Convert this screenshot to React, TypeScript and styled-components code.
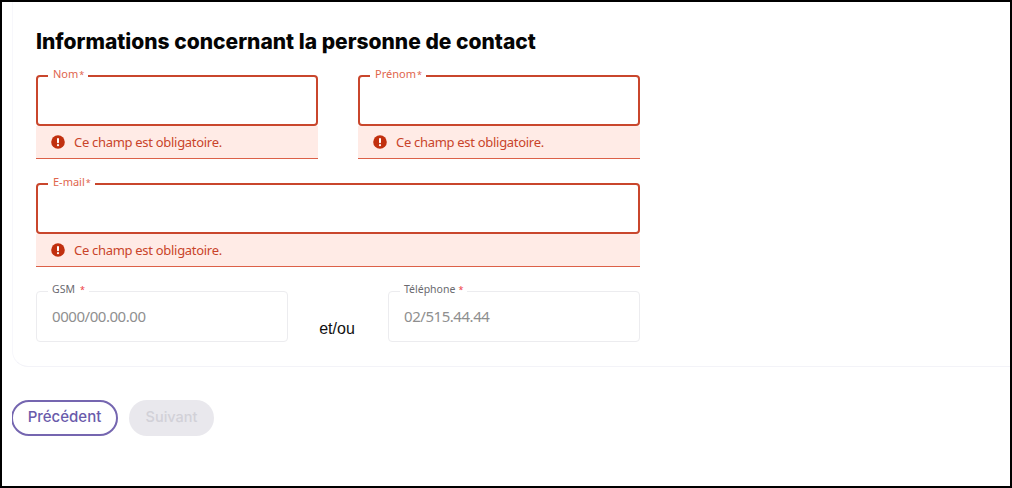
import React from "react";
import styled, { createGlobalStyle } from "styled-components";

const Global = createGlobalStyle`
  html, body { margin: 0; padding: 0; background: #fff; }
  * { box-sizing: border-box; }
`;

const Frame = styled.div`
  width: 1012px;
  height: 488px;
  border: 2px solid #000;
  background: #fff;
  padding-left: 10px;
  overflow: hidden;
`;

const Card = styled.section`
  height: 365px;
  padding: 27px 0 0 23px;
  border-bottom: 1px solid #f3f3f8;
  border-left: 1px solid #f7f7fb;
  border-bottom-left-radius: 16px;
  margin-right: -2px;
`;

const Title = styled.h2`
  margin: 0 0 20px;
  font: 800 21px/26px "Inter", "Liberation Sans", sans-serif;
  letter-spacing: 0;
  color: #050505;
`;

const Row = styled.div<{ $gap: number; $mb: number }>`
  display: flex;
  width: 604px;
  gap: ${(p) => p.$gap}px;
  margin-bottom: ${(p) => p.$mb}px;
`;

const Field = styled.div<{ $w?: number }>`
  flex: ${(p) => (p.$w ? `0 0 ${p.$w}px` : "1 1 0")};
  min-width: 0;
`;

const Box = styled.div<{ $error?: boolean }>`
  position: relative;
  height: 51px;
  padding: 12px 15px 0;
  border-style: solid;
  border-color: ${(p) => (p.$error ? "#c9462c" : "#ececef")};
  border-width: ${(p) => (p.$error ? "2px" : "1px")};
  border-radius: 4px;
  background: #fff;
  font: 400 15px/24px "Noto Sans", sans-serif;
  color: #8f8f8f;
  letter-spacing: -0.45px;
`;

const Label = styled.span<{ $error?: boolean }>`
  position: absolute;
  top: -10px;
  left: ${(p) => (p.$error ? 10 : 11)}px;
  padding: ${(p) => (p.$error ? "0 4px 0 5px" : "0 4px")};
  background: #fff;
  font: 400 ${(p) => (p.$error ? 11 : 10.5)}px/14px "Noto Sans", sans-serif;
  letter-spacing: 0;
  color: ${(p) => (p.$error ? "#e0654d" : "#6a6a6f")};
`;

const Req = styled.span<{ $gap: number }>`
  font-size: 9px;
  color: #ee3a3f;
  margin-left: ${(p) => p.$gap}px;
`;

const Star = styled.span`
  font-size: 9px;
  margin-left: 1px;
`;

const ErrorBar = styled.div`
  display: flex;
  align-items: center;
  gap: 9px;
  height: 33px;
  padding: 0 0 1px 15px;
  background: #ffebe6;
  border-bottom: 1px solid #dc6048;
  font: 400 13px/18px "Noto Sans", sans-serif;
  letter-spacing: -0.3px;
  color: #c9442a;
`;

const Separator = styled.div`
  flex: 1 1 0;
  display: flex;
  justify-content: center;
  padding: 29px 2px 0 0;
  font: 400 16px/18px "Liberation Sans", sans-serif;
  color: #111;
`;

const Actions = styled.div`
  display: flex;
  gap: 11px;
  margin-top: 33px;
  overflow: hidden;
`;

const Button = styled.button<{ $primary?: boolean }>`
  height: 36px;
  padding: 0 0 2px;
  width: ${(p) => (p.$primary ? 107 : 85)}px;
  margin-left: ${(p) => (p.$primary ? -1 : 0)}px;
  border-radius: 18px;
  border: ${(p) => (p.$primary ? "2px solid #7566b0" : "none")};
  background: ${(p) => (p.$primary ? "#fff" : "#e9e8ed")};
  color: ${(p) => (p.$primary ? "#6a5bab" : "#d2d1d8")};
  font: 500 ${(p) => (p.$primary ? 15 : 14.5)}px/20px "Inter", "Liberation Sans", sans-serif;
`;

const ErrorIcon = () => (
  <svg width="14" height="14" viewBox="0 0 14 14" aria-hidden="true">
    <circle cx="7" cy="7" r="6.8" fill="#c1300f" />
    <rect x="6" y="3" width="2" height="5.2" rx="0.9" fill="#fff" />
    <circle cx="7" cy="10.2" r="1.1" fill="#fff" />
  </svg>
);

const RequiredField = ({ label }: { label: string }) => (
  <>
    <Box $error>
      <Label $error>
        {label}
        <Star>*</Star>
      </Label>
    </Box>
    <ErrorBar>
      <ErrorIcon />
      Ce champ est obligatoire.
    </ErrorBar>
  </>
);

const OptionalField = ({ label, placeholder, gap }: { label: string; placeholder: string; gap: number }) => (
  <Box>
    <Label>
      {label}
      <Req $gap={gap}>*</Req>
    </Label>
    {placeholder}
  </Box>
);

export default function App() {
  return (
    <Frame>
      <Global />
      <Card>
        <Title>Informations concernant la personne de contact</Title>
        <Row $gap={40} $mb={24}>
          <Field>
            <RequiredField label="Nom" />
          </Field>
          <Field>
            <RequiredField label="Prénom" />
          </Field>
        </Row>
        <Row $gap={0} $mb={24}>
          <Field>
            <RequiredField label="E-mail" />
          </Field>
        </Row>
        <Row $gap={0} $mb={0}>
          <Field $w={252}>
            <OptionalField label="GSM" placeholder="0000/00.00.00" gap={5} />
          </Field>
          <Separator>et/ou</Separator>
          <Field $w={252}>
            <OptionalField label="Téléphone" placeholder="02/515.44.44" gap={3} />
          </Field>
        </Row>
      </Card>
      <Actions>
        <Button $primary>Précédent</Button>
        <Button disabled>Suivant</Button>
      </Actions>
    </Frame>
  );
}
